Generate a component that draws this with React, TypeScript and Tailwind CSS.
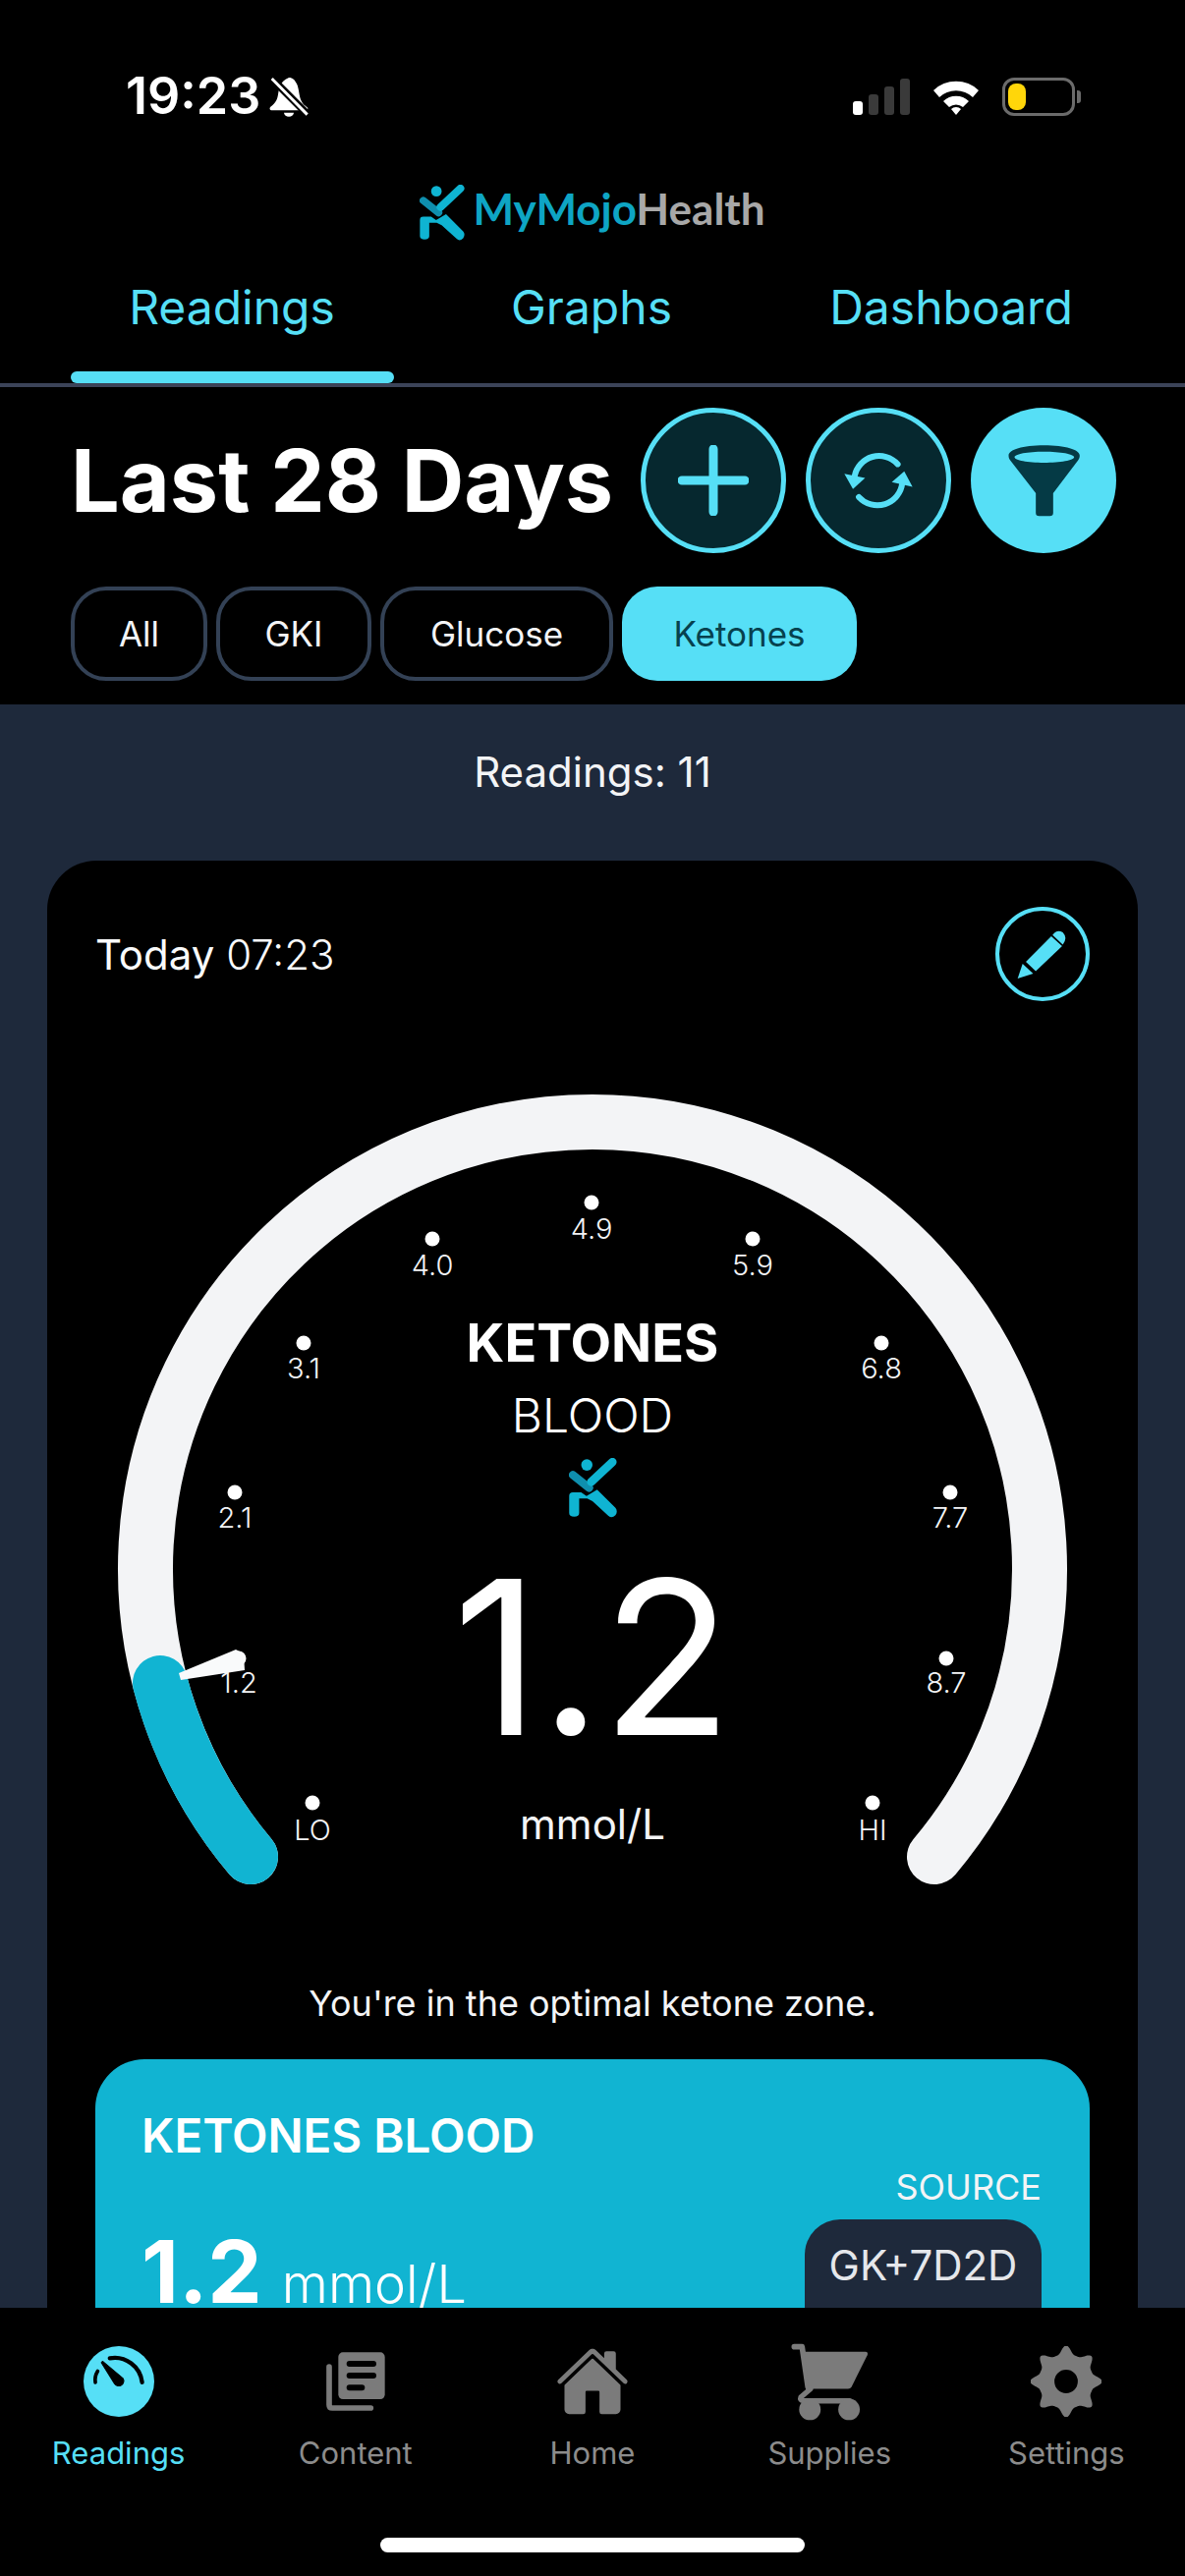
import React from "react";
import { IoHome } from "react-icons/io5";

function Logo({ className }: { className?: string }) {
  return (
    <svg viewBox="0 0 143 180" className={className}>
      <circle cx="53" cy="21" r="17" fill="#0fb4d2" />
      <path d="M11 51 L60 90" stroke="#0f8fae" strokeWidth="24" strokeLinecap="round" fill="none" />
      <path d="M66 72 L130 12" stroke="#0fb4d2" strokeWidth="25" strokeLinecap="round" fill="none" />
      <path d="M0 114 Q0 103 11 103 H36 L52 114 L84 95 L139 150 Q147 160 139 172 Q128 183 118 174 L70 130 L54 122 H30 V165 Q30 176 15 176 Q0 176 0 165 Z" fill="#0fb4d2" />
    </svg>
  );
}

function SpeedIcon() {
  return (
    <svg viewBox="0 0 215 215" className="w-[72px] h-[72px]">
      <circle cx="107.5" cy="107.5" r="107.5" fill="#56dff6" />
      <path d="M80 37 A 84 84 0 0 1 178 110" fill="none" stroke="#000" strokeWidth="13" strokeLinecap="round" />
      <path d="M54 50 L58 46 L120 98 A 15 15 0 1 1 94 114 Z" fill="#000" stroke="#000" strokeWidth="3" strokeLinejoin="round" />
      <path d="M43 76 Q 33 92 36 110" fill="none" stroke="#000" strokeWidth="11" strokeLinecap="round" />
    </svg>
  );
}

function ContentIcon() {
  return (
    <svg viewBox="810 68 186 186" className="w-[62px] h-[62px]">
      <rect x="850" y="72" width="142" height="143" rx="14" fill="#7b7b7b" />
      <path d="M884 107 H957 M884 143 H957 M884 180 H922" stroke="#000" strokeWidth="18" strokeLinecap="round" fill="none" />
      <path d="M822 116 V232 Q822 242 832 242 H949" stroke="#7b7b7b" strokeWidth="17" strokeLinecap="round" fill="none" />
    </svg>
  );
}

function CartIcon() {
  return (
    <svg viewBox="70 43 238 238" className="w-[79px] h-[79px]">
      <path d="M80 54 H104 L122 178" stroke="#7b7b7b" strokeWidth="17" strokeLinecap="round" strokeLinejoin="round" fill="none" />
      <path d="M112 69 H298 Q308 70 304 80 L256 176 Q252 183 245 183 H124 Z" fill="#7b7b7b" />
      <path d="M130 183 L100 209 Q96 218 108 220 H250" stroke="#7b7b7b" strokeWidth="16" strokeLinecap="round" strokeLinejoin="round" fill="none" />
      <circle cx="128" cy="246" r="33" fill="#7b7b7b" />
      <circle cx="248" cy="246" r="33" fill="#7b7b7b" />
    </svg>
  );
}

const gearPath = (() => {
  const pts: string[] = [];
  for (let i = 0; i < 240; i++) {
    const a = (i / 240) * Math.PI * 2;
    const c = Math.cos(8 * a);
    const r = 93 + 13 * c + 3 * Math.cos(16 * a);
    pts.push(`${(107.5 + r * Math.cos(a)).toFixed(1)} ${(107.5 + r * Math.sin(a)).toFixed(1)}`);
  }
  return `M${pts.join("L")}Z M143 107.5 A35.5 35.5 0 1 0 72 107.5 A35.5 35.5 0 1 0 143 107.5Z`;
})();

function GearIcon() {
  return (
    <svg viewBox="0 0 215 215" className="w-[72px] h-[72px]">
      <path d={gearPath} fill="#7b7b7b" fillRule="evenodd" />
    </svg>
  );
}

function PencilIcon() {
  return (
    <svg viewBox="105 100 170 170" className="w-[57px] h-[57px]">
      <polygon points="113,258 128,213 160,243" fill="#56dff6" />
      <polygon points="138,207 215,130 248,160 168,236" fill="#56dff6" />
      <path d="M219 126 Q232 108 250 118 Q266 135 250 155 Z" fill="#56dff6" />
    </svg>
  );
}

function SyncIcon() {
  return (
    <svg viewBox="145 115 215 185" className="w-[72px] h-[62px]">
      <path d="M311 158 A 76 76 0 0 0 180 195" fill="none" stroke="#56dff6" strokeWidth="18" strokeLinecap="round" />
      <path d="M193 258 A 76 76 0 0 0 325 215" fill="none" stroke="#56dff6" strokeWidth="18" strokeLinecap="round" />
      <polygon points="149,187 212,200 175,234" fill="#56dff6" />
      <polygon points="331,180 356,227 293,213" fill="#56dff6" />
    </svg>
  );
}

function FunnelIcon() {
  return (
    <svg viewBox="640 95 230 225" className="w-[77px] h-[75px]">
      <path
        fillRule="evenodd"
        fill="#053a45"
        d="M755 99 C820 99 864 112 864 130 C864 136 862 141 858 146 L783 245 V305 Q783 315 773 315 H740 Q730 315 730 305 V245 L653 146 C649 141 647 136 647 130 C647 112 690 99 755 99 Z M755 118 C705 118 665 125 665 135 C665 145 705 152 755 152 C805 152 847 145 847 135 C847 125 805 118 755 118 Z"
      />
    </svg>
  );
}

function BellIcon() {
  return (
    <svg viewBox="0 0 120 123" className="w-[40px] h-[41px]">
      <path d="M60 3 C72 3 78 10 84 22 C92 38 90 62 100 78 C106 90 118 92 118 98 C118 102 114 103 110 103 H10 C4 103 0 100 2 95 C6 88 22 82 26 60 C30 40 30 15 60 3Z" fill="#fff" />
      <path d="M45 110 A 15 12 0 0 0 75 110 Z" fill="#fff" />
      <path d="M6 4 L118 116" stroke="#000" strokeWidth="23" />
      <path d="M8 6 L116 116" stroke="#fff" strokeWidth="9" />
    </svg>
  );
}

const ticks: [string, number, number, number, number][] = [
  ["LO", 318, 1835, 318, 1873],
  ["1.2", 243, 1688, 243, 1723],
  ["2.1", 239, 1519, 239, 1555],
  ["3.1", 309, 1367, 309, 1403],
  ["4.0", 440, 1261, 440, 1298],
  ["4.9", 602, 1224, 602, 1261],
  ["5.9", 766, 1261, 766, 1298],
  ["6.8", 897, 1367, 897, 1403],
  ["7.7", 967, 1519, 967, 1555],
  ["8.7", 963, 1688, 963, 1723],
  ["HI", 888, 1835, 888, 1873],
];

function Gauge() {
  return (
    <svg viewBox="97 1090 1013 860" className="block w-[1013px] h-[860px]">
      <path d="M255 1890 A 455 455 0 1 1 951 1890" fill="none" stroke="#f3f4f6" strokeWidth="56" strokeLinecap="round" />
      <path d="M255 1890 A 455 455 0 0 1 163 1713" fill="none" stroke="#11b4d2" strokeWidth="56" strokeLinecap="round" />
      {ticks.map(([t, dx, dy, lx, ly]) => (
        <g key={t}>
          <circle cx={dx} cy={dy} r="7.5" fill="#fff" />
          <text x={lx} y={ly} textAnchor="middle" fill="#f3f4f6" fontSize="29" fontWeight="300" fontFamily="Inter, sans-serif">{t}</text>
        </g>
      ))}
      <polygon points="182,1703 240,1679 248,1683 249,1700 184,1710" fill="#f9fafb" />
    </svg>
  );
}

function NavItem({ icon, label, active }: { icon: React.ReactNode; label: string; active?: boolean }) {
  return (
    <div className={`flex flex-col items-center ${active ? "text-[#56dff6]" : "text-[#7b7b7b]"}`}>
      <div className="h-[80px] w-[80px] flex items-center justify-center">{icon}</div>
      <div className={`mt-[15px] text-[31px] leading-[36px] ${active ? "text-[#56dff6]" : "text-[#8c8c8c]"}`}>{label}</div>
    </div>
  );
}

function Chip({ label, active, w }: { label: string; active?: boolean; w: string }) {
  return (
    <div
      className={`h-[96px] ${w} rounded-[36px] flex items-center justify-center text-[35px] ${
        active ? "bg-[#56dff6] text-[#07414e]" : "border-[4px] border-[#334155] text-[#f3f4f6]"
      }`}
    >
      {label}
    </div>
  );
}

export default function App() {
  return (
    <div className="w-[1206px] h-[2622px] bg-black flex flex-col overflow-hidden text-white font-['Inter',sans-serif]">
      {/* status bar */}
      <div className="h-[176px] shrink-0 flex items-start pt-[72px] pl-[128px] pr-[106px] justify-between">
        <div className="flex items-center gap-[9px]">
          <span className="text-[52px] leading-[52px] font-semibold">19:23</span>
          <BellIcon />
        </div>
        <div className="flex items-center gap-[22px] h-[40px] mt-[6px]">
          <div className="flex items-end gap-[6px] h-[38px]">
            <div className="w-[10px] h-[14px] rounded-[3px] bg-white" />
            <div className="w-[10px] h-[21px] rounded-[3px] bg-[#3a3a3a]" />
            <div className="w-[10px] h-[29px] rounded-[3px] bg-[#3a3a3a]" />
            <div className="w-[10px] h-[37px] rounded-[3px] bg-[#3a3a3a]" />
          </div>
          <svg viewBox="0 0 50 38" className="w-[50px] h-[38px]">
            <path d="M2 13 A33 33 0 0 1 48 13 L42 20 A25 25 0 0 0 8 20 Z" fill="#fff" />
            <path d="M12 24 A19 19 0 0 1 38 24 L32 30 A11 11 0 0 0 18 30 Z" fill="#fff" />
            <path d="M20 32 A7 7 0 0 1 30 32 L25 38 Z" fill="#fff" />
          </svg>
          <div className="flex items-center">
            <div className="w-[74px] h-[39px] rounded-[12px] border-[3px] border-[#6b6b6b] p-[3px]">
              <div className="w-[18px] h-full rounded-[8px] bg-[#ffd60a]" />
            </div>
            <div className="w-[4px] h-[13px] ml-[2px] rounded-r-[3px] bg-[#6b6b6b]" />
          </div>
        </div>
      </div>

      {/* logo */}
      <div className="h-[84px] shrink-0 flex items-start justify-center pt-[12px] gap-[8px]">
        <Logo className="w-[46px] h-[57px]" />
        <div className="font-['Lato',sans-serif] font-bold text-[44px] leading-[48px]">
          <span className="text-[#0ea5c4]">MyMojo</span>
          <span className="text-[#a8a8a8]">Health</span>
        </div>
      </div>

      {/* tabs */}
      <div className="h-[134px] shrink-0 border-b-[4px] border-[#3b4358] flex px-[53px] text-[#56dff6] text-[48px]">
        <div className="w-[366px] flex flex-col items-center justify-between pt-[26px]">
          <span className="leading-[54px]">Readings</span>
          <div className="w-[329px] h-[12px] rounded-[6px] bg-[#56dff6]" />
        </div>
        <div className="w-[366px] text-center leading-[54px] pt-[26px]">Graphs</div>
        <div className="w-[366px] text-center leading-[54px] pt-[26px]">Dashboard</div>
      </div>

      {/* title + actions */}
      <div className="shrink-0 flex items-center pl-[72px] pt-[21px]">
        <div className="w-[580px] text-[88px] leading-[148px] font-bold whitespace-nowrap">Last 28 Days</div>
        <div className="flex gap-[20px]">
          <div className="w-[148px] h-[148px] rounded-full border-[5px] border-[#56dff6] bg-[#06282f] flex items-center justify-center">
            <svg viewBox="0 0 72 72" className="w-[72px] h-[72px]">
              <path d="M4 36 H68 M36 4 V68" stroke="#56dff6" strokeWidth="9" strokeLinecap="round" fill="none" />
            </svg>
          </div>
          <div className="w-[148px] h-[148px] rounded-full border-[5px] border-[#56dff6] bg-[#06282f] flex items-center justify-center">
            <SyncIcon />
          </div>
          <div className="w-[148px] h-[148px] rounded-full bg-[#56dff6] flex items-center justify-center">
            <FunnelIcon />
          </div>
        </div>
      </div>

      {/* chips */}
      <div className="shrink-0 flex pl-[72px] gap-[9px] pt-[34px] pb-[24px]">
        <Chip label="All" w="w-[139px]" />
        <Chip label="GKI" w="w-[158px]" />
        <Chip label="Glucose" w="w-[237px]" />
        <Chip label="Ketones" w="w-[239px]" active />
      </div>

      {/* scroll area */}
      <div className="flex-1 min-h-0 overflow-hidden bg-[#1e293b] pl-[48px]">
        <div className="h-[159px] pt-[45px] text-center text-[42px] leading-[48px] -ml-[48px] text-[#f3f4f6]">Readings: 11</div>
        <div className="w-[1110px] h-[1700px] bg-black rounded-[50px] px-[49px] pt-[47px]">
          <div className="flex items-center justify-between h-[96px]">
            <div className="text-[42px] text-[#f9fafb]">
              <span>Today</span> <span className="font-light">07:23</span>
            </div>
            <div className="w-[96px] h-[96px] rounded-full border-[4px] border-[#56dff6] flex items-center justify-center">
              <PencilIcon />
            </div>
          </div>

          <div className="relative mt-[71px]">
            <Gauge />
            <div className="absolute inset-0 flex flex-col items-center pt-[244px] pointer-events-none">
              <div className="text-[54px] leading-[66px] font-bold">KETONES</div>
              <div className="text-[48px] leading-[58px] font-light mt-[12px]">BLOOD</div>
              <Logo className="w-[49px] h-[61px] mt-[14px]" />
              <div className="text-[218px] leading-[220px] mt-[32px]">1.2</div>
              <div className="text-[42px] leading-[48px] mt-[36px] text-[#f3f4f6]">mmol/L</div>
            </div>
          </div>

          <div className="text-center text-[36px] leading-[44px] text-[#f3f4f6] mt-[67px]">You're in the optimal ketone zone.</div>

          <div className="mt-[35px] h-[500px] rounded-[50px] bg-[#11b4d2] pl-[47px] pr-[49px] pt-[50px]">
            <div className="flex justify-between">
              <div>
                <div className="text-[47.5px] leading-[56px] font-semibold">KETONES BLOOD</div>
                <div className="flex items-baseline mt-[60px]">
                  <span className="text-[88px] leading-[100px] font-bold">1.2</span>
                  <span className="text-[54px] leading-[60px] font-light ml-[20px]">mmol/L</span>
                </div>
              </div>
              <div className="flex flex-col items-end pt-[58px]">
                <div className="text-[36px] leading-[44px] text-[#f3f4f6]">SOURCE</div>
                <div className="mt-[11px] w-[241px] h-[130px] rounded-[36px] bg-[#1e293b] text-[#e5e7eb] text-[42px] flex justify-center pt-[22px] leading-[50px]">GK+7D2D</div>
              </div>
            </div>
          </div>
        </div>
      </div>

      {/* bottom nav */}
      <div className="h-[273px] shrink-0 bg-black grid grid-cols-5 pt-[35px] relative">
        <NavItem icon={<SpeedIcon />} label="Readings" active />
        <NavItem icon={<ContentIcon />} label="Content" />
        <NavItem icon={<IoHome size={76} />} label="Home" />
        <NavItem icon={<CartIcon />} label="Supplies" />
        <NavItem icon={<GearIcon />} label="Settings" />
        <div className="absolute left-[387px] top-[234px] w-[432px] h-[15px] rounded-full bg-white" />
      </div>
    </div>
  );
}
